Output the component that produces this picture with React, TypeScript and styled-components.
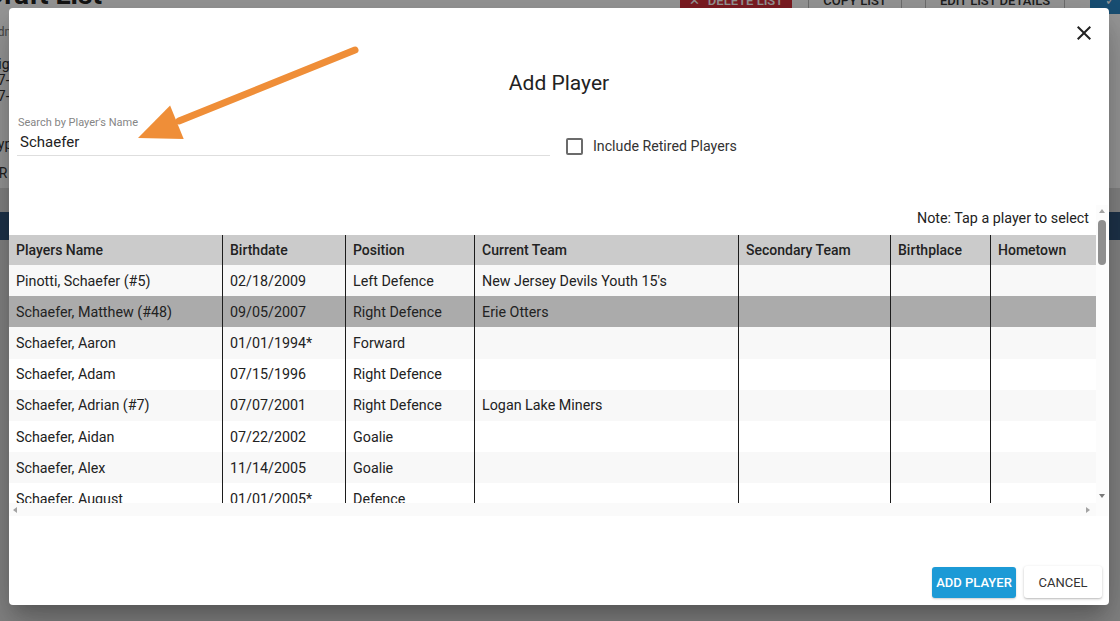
import React from 'react';
import styled, { createGlobalStyle } from 'styled-components';

const GlobalStyle = createGlobalStyle`
  html, body { margin: 0; padding: 0; }
  body { font-family: Roboto, "Liberation Sans", Arial, sans-serif; overflow: hidden; }
  * { box-sizing: border-box; }
`;

/* ---------- background page ---------- */
const Page = styled.div`
  position: relative;
  width: 1120px;
  height: 621px;
  overflow: hidden;
  background: #dedede;
  color: #222;
`;

const PageHeader = styled.header`
  display: flex;
  align-items: flex-end;
  height: 34px;
  margin-top: -20px;
  background: #fff;
`;

const PageTitle = styled.h1`
  margin: 0 0 4px -14px;
  font-size: 28px;
  line-height: 30px;
  font-weight: 700;
  color: #222;
`;

const HeaderActions = styled.div`
  display: flex;
  align-items: flex-end;
  margin-left: auto;
  margin-right: -10px;
`;

const PageButton = styled.div<{ $kind: 'danger' | 'outline' | 'primary'; $w: number; $ml: number }>`
  width: ${p => p.$w}px;
  margin-left: ${p => p.$ml}px;
  height: 28px;
  display: flex;
  align-items: center;
  justify-content: center;
  gap: 8px;
  font-size: 13px;
  font-weight: 500;
  border-radius: 3px;
  color: ${p => (p.$kind === 'outline' ? '#333' : '#fff')};
  background: ${p => (p.$kind === 'danger' ? '#d32f3a' : p.$kind === 'primary' ? '#2a86c4' : '#fff')};
  border: ${p => (p.$kind === 'outline' ? '1px solid #bbb' : 'none')};
`;

const InfoCard = styled.section`
  height: 174px;
  background: #fff;
  padding-top: 10px;
`;

const InfoLine = styled.div<{ $mt: number; $small?: boolean }>`
  margin: ${p => p.$mt}px 0 0 -10px;
  font-size: ${p => (p.$small ? 12 : 14)}px;
  line-height: 16px;
  color: ${p => (p.$small ? '#777' : '#333')};
  white-space: nowrap;
`;

const NavBar = styled.nav`
  margin-top: 24px;
  height: 28px;
  background: #33577d;
`;

/* ---------- overlay / dialog ---------- */
const Overlay = styled.div`
  position: absolute;
  inset: 0;
  background: rgba(0, 0, 0, 0.4);
  padding: 8px 0 0 9px;
`;

const Dialog = styled.div`
  position: relative;
  width: 1100px;
  height: 597px;
  background: #fff;
  border-radius: 4px;
  display: flex;
  flex-direction: column;
  box-shadow: 0 11px 15px -7px rgba(0, 0, 0, 0.2), 0 24px 38px 3px rgba(0, 0, 0, 0.14),
    0 9px 46px 8px rgba(0, 0, 0, 0.12);
`;

const DialogTop = styled.div`
  display: flex;
  justify-content: flex-end;
  padding: 13px 13px 0 0;
`;

const CloseButton = styled.button`
  width: 24px;
  height: 24px;
  padding: 0;
  border: 0;
  background: transparent;
  color: #222;
  display: flex;
  align-items: center;
  justify-content: center;
  cursor: pointer;
`;

const Title = styled.h2`
  margin: 26px 0 0;
  text-align: center;
  font-size: 21px;
  line-height: 24px;
  font-weight: 400;
  color: #222;
`;

const SearchRow = styled.div`
  display: flex;
  align-items: flex-start;
  margin-top: 21px;
  padding-left: 8px;
`;

const Field = styled.label`
  display: block;
  width: 533px;
`;

const FieldLabel = styled.div`
  padding-left: 1px;
  font-size: 11px;
  line-height: 13px;
  color: #858585;
`;

const FieldInput = styled.input`
  display: block;
  width: 100%;
  height: 24px;
  margin-top: 3px;
  padding: 0 3px 3px;
  border: 0;
  border-bottom: 1px solid #dedede;
  font-family: Roboto, "Liberation Sans", Arial, sans-serif;
  font-size: 15px;
  line-height: 20px;
  color: #222;
  outline: none;
  background: transparent;
`;

const CheckGroup = styled.label`
  display: flex;
  align-items: center;
  height: 20px;
  margin: 20px 0 0 16px;
  font-size: 14.2px;
  color: #333;
`;

const CheckBox = styled.span`
  width: 17px;
  height: 17px;
  border: 2px solid #6b6b6b;
  border-radius: 2px;
  margin-right: 10px;
`;

const ScrollArea = styled.div`
  display: grid;
  grid-template-columns: 1087px 12px;
  grid-template-rows: 298px 13px;
  margin-top: 49px;
`;

const Viewport = styled.div`
  overflow: hidden;
`;

const NoteRow = styled.div`
  height: 30px;
  display: flex;
  justify-content: flex-end;
  padding: 3px 7px 0 0;
  font-size: 14.3px;
  line-height: 20px;
  color: #222;
`;

const Table = styled.div`
  width: max-content;
`;

const COLS = '213px 123px 129px 264px 152px 100px 140px';

const Row = styled.div<{ $variant: 'head' | 'odd' | 'even' | 'selected' }>`
  display: grid;
  grid-template-columns: ${COLS};
  height: ${p => (p.$variant === 'head' ? '30px' : '31.2px')};
  font-size: ${p => (p.$variant === 'head' ? '14px' : '14.3px')};
  font-weight: ${p => (p.$variant === 'head' ? 500 : 400)};
  color: #222;
  background: ${p =>
    p.$variant === 'head'
      ? '#cbcbcb'
      : p.$variant === 'selected'
      ? '#ababab'
      : p.$variant === 'odd'
      ? '#f8f8f8'
      : '#ffffff'};
`;

const Cell = styled.div`
  display: flex;
  align-items: center;
  padding-left: 7px;
  white-space: nowrap;
  overflow: hidden;
  & + & {
    border-left: 1px solid #1c1c1c;
  }
`;

const VScroll = styled.div`
  display: flex;
  flex-direction: column;
  align-items: center;
  background: #fcfcfc;
`;

const Tri = styled.span<{ $dir: 'up' | 'down' | 'left' | 'right'; $color: string }>`
  width: 0;
  height: 0;
  border-style: solid;
  border-color: transparent;
  ${p =>
    p.$dir === 'up'
      ? `border-width: 0 3.5px 4px 3.5px; border-bottom-color: ${p.$color};`
      : p.$dir === 'down'
      ? `border-width: 4px 3.5px 0 3.5px; border-top-color: ${p.$color};`
      : p.$dir === 'left'
      ? `border-width: 3.5px 4px 3.5px 0; border-right-color: ${p.$color};`
      : `border-width: 3.5px 0 3.5px 4px; border-left-color: ${p.$color};`}
`;

const UpSlot = styled.div`
  margin-top: 4px;
  display: flex;
`;

const Thumb = styled.div`
  width: 8px;
  height: 45px;
  margin-top: 7px;
  border-radius: 4px;
  background: #8f8f8f;
`;

const DownSlot = styled.div`
  margin-top: auto;
  margin-bottom: 5px;
  display: flex;
`;

const HScroll = styled.div`
  display: flex;
  align-items: center;
  justify-content: space-between;
  padding: 0 6px 0 4px;
  background: #fafafa;
`;

const Corner = styled.div`
  background: #fcfcfc;
`;

const Actions = styled.div`
  display: flex;
  justify-content: flex-end;
  align-items: flex-end;
  gap: 8px;
  margin-top: auto;
  padding: 0 7px 7px 0;
`;

const ActionButton = styled.button<{ $primary?: boolean }>`
  height: ${p => (p.$primary ? 31 : 32)}px;
  width: ${p => (p.$primary ? 84 : 78)}px;
  padding: 0;
  border: 0;
  border-radius: 3px;
  font-family: Roboto, "Liberation Sans", Arial, sans-serif;
  font-size: 13px;
  font-weight: ${p => (p.$primary ? 500 : 400)};
  text-transform: uppercase;
  color: ${p => (p.$primary ? '#fff' : '#333')};
  background: ${p => (p.$primary ? '#1c9ad6' : '#fff')};
  box-shadow: ${p =>
    p.$primary ? '0 1px 2px rgba(0,0,0,0.2)' : '0 1px 3px rgba(0,0,0,0.22), 0 1px 1px rgba(0,0,0,0.08)'};
  cursor: pointer;
`;

const Annotation = styled.svg`
  position: absolute;
  left: 0;
  top: 0;
  width: 1100px;
  height: 597px;
  pointer-events: none;
`;

type Player = { name: string; birth: string; pos: string; team: string };

const players: Player[] = [
  { name: 'Pinotti, Schaefer (#5)', birth: '02/18/2009', pos: 'Left Defence', team: "New Jersey Devils Youth 15's" },
  { name: 'Schaefer, Matthew (#48)', birth: '09/05/2007', pos: 'Right Defence', team: 'Erie Otters' },
  { name: 'Schaefer, Aaron', birth: '01/01/1994*', pos: 'Forward', team: '' },
  { name: 'Schaefer, Adam', birth: '07/15/1996', pos: 'Right Defence', team: '' },
  { name: 'Schaefer, Adrian (#7)', birth: '07/07/2001', pos: 'Right Defence', team: 'Logan Lake Miners' },
  { name: 'Schaefer, Aidan', birth: '07/22/2002', pos: 'Goalie', team: '' },
  { name: 'Schaefer, Alex', birth: '11/14/2005', pos: 'Goalie', team: '' },
  { name: 'Schaefer, August', birth: '01/01/2005*', pos: 'Defence', team: '' },
  { name: 'Schaefer, Austin', birth: '03/12/2004', pos: 'Forward', team: '' },
];

const headers = ['Players Name', 'Birthdate', 'Position', 'Current Team', 'Secondary Team', 'Birthplace', 'Hometown'];

export default function App() {
  const selected = 1;
  return (
    <>
      <GlobalStyle />
      <Page>
        <PageHeader>
          <PageTitle>Draft List</PageTitle>
          <HeaderActions>
            <PageButton $kind="danger" $w={112} $ml={0}>
              <span>✕</span>
              <span>DELETE LIST</span>
            </PageButton>
            <PageButton $kind="outline" $w={94} $ml={16}>
              COPY LIST
            </PageButton>
            <PageButton $kind="outline" $w={140} $ml={23}>
              EDIT LIST DETAILS
            </PageButton>
            <PageButton $kind="primary" $w={40} $ml={25}>
              ✓
            </PageButton>
          </HeaderActions>
        </PageHeader>
        <InfoCard>
          <InfoLine $mt={0} $small>Admini</InfoLine>
          <InfoLine $mt={16}>Sig</InfoLine>
          <InfoLine $mt={0}>07-</InfoLine>
          <InfoLine $mt={0}>07-</InfoLine>
          <InfoLine $mt={32}>Type</InfoLine>
          <InfoLine $mt={13}>RR</InfoLine>
        </InfoCard>
        <NavBar />

        <Overlay>
          <Dialog role="dialog">
            <DialogTop>
              <CloseButton aria-label="close">
                <svg width="24" height="24" viewBox="0 0 24 24" fill="currentColor">
                  <path d="M19 6.41 17.59 5 12 10.59 6.41 5 5 6.41 10.59 12 5 17.59 6.41 19 12 13.41 17.59 19 19 17.59 13.41 12z" />
                </svg>
              </CloseButton>
            </DialogTop>
            <Title>Add Player</Title>
            <SearchRow>
              <Field>
                <FieldLabel>Search by Player's Name</FieldLabel>
                <FieldInput defaultValue="Schaefer" />
              </Field>
              <CheckGroup>
                <CheckBox />
                Include Retired Players
              </CheckGroup>
            </SearchRow>

            <ScrollArea>
              <Viewport>
                <NoteRow>Note: Tap a player to select</NoteRow>
                <Table>
                  <Row $variant="head">
                    {headers.map(h => (
                      <Cell key={h}>{h}</Cell>
                    ))}
                  </Row>
                  {players.map((p, i) => (
                    <Row key={p.name} $variant={i === selected ? 'selected' : i % 2 === 0 ? 'odd' : 'even'}>
                      <Cell>{p.name}</Cell>
                      <Cell>{p.birth}</Cell>
                      <Cell>{p.pos}</Cell>
                      <Cell>{p.team}</Cell>
                      <Cell />
                      <Cell />
                      <Cell />
                    </Row>
                  ))}
                </Table>
              </Viewport>
              <VScroll>
                <UpSlot>
                  <Tri $dir="up" $color="#a3a3a3" />
                </UpSlot>
                <Thumb />
                <DownSlot>
                  <Tri $dir="down" $color="#7a7a7a" />
                </DownSlot>
              </VScroll>
              <HScroll>
                <Tri $dir="left" $color="#a3a3a3" />
                <Tri $dir="right" $color="#a3a3a3" />
              </HScroll>
              <Corner />
            </ScrollArea>

            <Actions>
              <ActionButton $primary>Add Player</ActionButton>
              <ActionButton>Cancel</ActionButton>
            </Actions>

            <Annotation viewBox="0 0 1100 597">
              <line x1="346" y1="42" x2="170" y2="113" stroke="#ef8e38" strokeWidth="7" strokeLinecap="round" />
              <polygon points="129,130 174.7,130.9 161.1,97.5" fill="#ef8e38" />
            </Annotation>
          </Dialog>
        </Overlay>
      </Page>
    </>
  );
}
